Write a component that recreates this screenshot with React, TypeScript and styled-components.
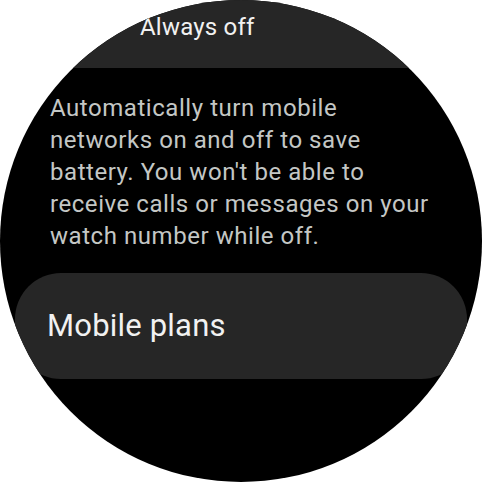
import React from "react";
import styled, { createGlobalStyle } from "styled-components";

const GlobalStyle = createGlobalStyle`
  html, body {
    margin: 0;
    padding: 0;
    background: #ffffff;
  }
  body {
    font-family: Roboto, "Noto Sans", "Liberation Sans", sans-serif;
  }
`;

const Watch = styled.div`
  width: 482px;
  height: 482px;
  border-radius: 50%;
  background: #000000;
  overflow: hidden;
  display: flex;
  flex-direction: column;
`;

const Chip = styled.div<{ $height: number; $indent: number }>`
  flex: none;
  box-sizing: border-box;
  margin: 0 15px;
  height: ${(p) => p.$height}px;
  padding-left: ${(p) => p.$indent}px;
  border-radius: 46px;
  background: #262626;
  display: flex;
  align-items: center;
`;

const TopChip = styled(Chip)`
  margin-top: -14px;
`;

const ChipLabel = styled.span<{ $size: number }>`
  color: #f1f1f1;
  font-size: ${(p) => p.$size}px;
  line-height: 1.2;
  letter-spacing: 0.2px;
  white-space: nowrap;
`;

const Description = styled.p`
  margin: 24px 0 21px;
  padding: 0 46px 0 50px;
  color: #c4c7c5;
  font-size: 24px;
  line-height: 32px;
  letter-spacing: 0.55px;
`;

const App = () => {
  return (
    <>
      <GlobalStyle />
      <Watch>
        <TopChip $height={82} $indent={125}>
          <ChipLabel $size={24}>Always off</ChipLabel>
        </TopChip>
        <Description>
          Automatically turn mobile networks on and off to save battery. You
          won't be able to receive calls or messages on your watch number while
          off.
        </Description>
        <Chip $height={106} $indent={32}>
          <ChipLabel $size={31}>Mobile plans</ChipLabel>
        </Chip>
      </Watch>
    </>
  );
};

export default App;
